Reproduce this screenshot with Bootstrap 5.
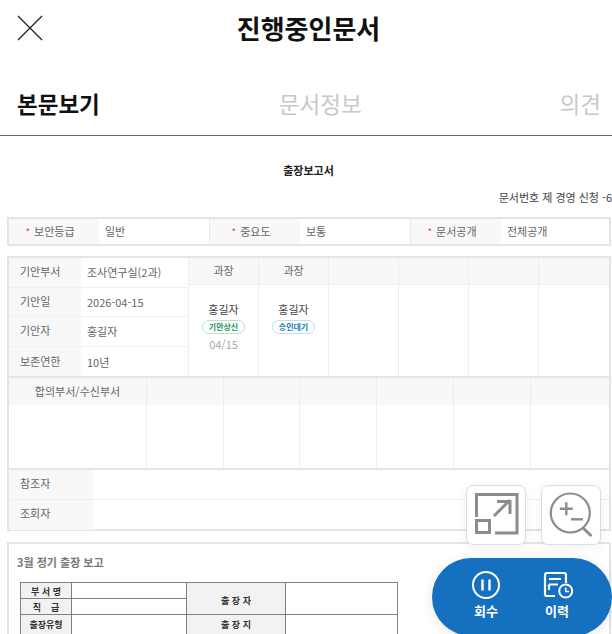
<!DOCTYPE html>
<html lang="ko"><head><meta charset="utf-8"><title>진행중인문서</title>
<link href="https://cdn.jsdelivr.net/npm/bootstrap@5.3.0/dist/css/bootstrap.min.css" rel="stylesheet">
<style>
html,body{height:634px;overflow:hidden}
body{font-family:"Noto Sans CJK KR","Noto Sans",sans-serif;color:#666;background:#fff;font-size:11px;width:612px;position:relative}
.top-head{height:57px}
.top-head .x-btn{left:17px;top:15px;line-height:0}
.top-head h1{font-size:26px;font-weight:700;color:#111;margin:0;line-height:55px;padding-left:5px}
.tab-bar{height:79px;padding:18px 11px 0 17px;border-bottom:1px solid #666;font-size:22.5px;line-height:57px;color:#c8c8c8}
.tab-bar .on{font-weight:700;color:#111}
.tab-mid{margin-right:19px}
.doc-title{font-size:11px;font-weight:700;color:#222;margin-top:26px;line-height:16px;padding-left:5px}
.doc-no{font-size:11px;color:#444;margin-top:11px;line-height:16px;height:28px;white-space:nowrap}
.frame{margin:0 1px 0 7px;border:2px solid #e4e4e4}
.f1{height:29px}
.cell-l{background:#f8f8f8;display:flex;align-items:center}
.pk{color:#e8467c;margin-right:4px;font-size:10px}
.meta-row{display:grid;grid-template-columns:90px 110px 1px 90px 110px 1px 90px 1fr;height:25px}
.meta-row .lab{justify-content:center;padding-right:8px}
.meta-row .val{padding-left:6px;line-height:25px}
.vb{background:#eaeaea}
.f2{margin-top:10px;height:275px}
.upper{display:grid;grid-template-columns:179px repeat(5,70px) 1fr;height:120px;border-bottom:2px solid #e4e4e4}
.info{display:grid;grid-template-rows:repeat(4,1fr)}
.info-row{display:grid;grid-template-columns:72px 1fr;border-bottom:1px solid #f0f0f0;line-height:26px}
.info-row:last-child{border-bottom:0;line-height:28px}
.info-row span:first-child{background:#f8f8f8;padding-left:11px}
.info-row span:last-child{padding-left:6px;padding-top:1px}
.appr{display:flex;flex-direction:column;border-left:1px solid #eee;text-align:center}
.appr-h{height:27px;background:#f8f8f8;border-bottom:1px solid #eee;line-height:25px;font-size:11px}
.appr-b{flex:1;padding-top:16px;line-height:17px;color:#444}
.stamp{display:inline-block;font-size:8px;font-weight:700;border:1px solid;border-radius:8px;line-height:12px;padding:0 6px;margin-top:2px;vertical-align:top}
.st-g{color:#1c9a55;border-color:#b9e3cb}
.st-b{color:#1a7fb5;border-color:#c3dcec}
.ad{color:#aaa;display:block;margin-top:1px}
.lower{display:grid;grid-template-columns:137px 77px 76px 77px 77px 77px 1fr;height:92px;border-bottom:2px solid #e4e4e4}
.lo-c{border-left:1px solid #eee}
.lo-c:first-child{border-left:0}
.lo-h{height:27px;background:#f8f8f8;line-height:26px;text-align:center}
.ref-row{display:grid;grid-template-columns:84px 1fr;height:30px;line-height:27px;border-bottom:1px solid #eee}
.ref-row:last-child{border-bottom:0}
.ref-row span:first-child{background:#f8f8f8;padding-left:11px}
.f3{margin-top:11px;height:110px;padding:10px 11px 0;border-bottom:0;overflow:hidden}
.f3 h2{font-size:11px;font-weight:700;color:#777;margin:0 0 11px -3px;line-height:17px}
.form-tb{table-layout:fixed;width:378px;border-collapse:collapse;font-size:9px;font-weight:700;color:#333;text-align:center}
.form-tb td{border:1px solid #808080;height:16px;padding:2px 0 0;line-height:13px}
.form-tb td[rowspan]{padding-top:3px}
.form-tb .g{background:#f2f2f2}
.form-tb .tall td{height:21px;padding-top:0;vertical-align:top;line-height:19px}
.tool{position:absolute;width:60px;height:60px;top:485px;background:rgba(255,255,255,.92);border:1px solid #ddd;border-radius:7px;box-shadow:0 2px 12px rgba(0,0,0,.06);padding:0}
.tool svg{display:block}
.t1{left:466px}.t2{left:541px}
.pill{position:absolute;left:432px;top:558px;width:180px;height:78px;border-radius:39px;background:#1570bf;color:#fff;font-size:13px;font-weight:700;box-shadow:0 2px 14px rgba(0,0,0,.1)}
.pill-i{position:absolute;top:12px;text-align:center;width:40px;line-height:16px}
.pill-i svg{display:block;margin:0 auto 3px}
.p1{left:34px}.p2{left:105px}
</style></head><body>
<header class="top-head position-relative text-center">
<span class="x-btn position-absolute"><svg width="26" height="26" viewBox="0 0 26 26"><path d="M1 1 25 25M25 1 1 25" stroke="#222" stroke-width="1.3" fill="none"/></svg></span>
<h1>진행중인문서</h1>
</header>
<nav class="tab-bar d-flex justify-content-between"><span class="on">본문보기</span><span class="tab-mid">문서정보</span><span>의견</span></nav>
<div class="doc-title text-center">출장보고서</div>
<div class="doc-no text-end">문서번호 제 경영 신청 -6</div>
<section class="frame f1"><div class="meta-row">
<span class="cell-l lab"><span class="pk">*</span>보안등급</span><span class="val">일반</span><span class="vb"></span>
<span class="cell-l lab"><span class="pk">*</span>중요도</span><span class="val">보통</span><span class="vb"></span>
<span class="cell-l lab"><span class="pk">*</span>문서공개</span><span class="val">전체공개</span>
</div></section>
<section class="frame f2">
<div class="upper">
<div class="info">
<div class="info-row"><span>기안부서</span><span>조사연구실(2과)</span></div>
<div class="info-row"><span>기안일</span><span>2026-04-15</span></div>
<div class="info-row"><span>기안자</span><span>홍길자</span></div>
<div class="info-row"><span>보존연한</span><span>10년</span></div>
</div>
<div class="appr"><div class="appr-h">과장</div><div class="appr-b">홍길자<br><span class="stamp st-g">기안상신</span><span class="ad">04/15</span></div></div>
<div class="appr"><div class="appr-h">과장</div><div class="appr-b">홍길자<br><span class="stamp st-b">승인대기</span></div></div>
<div class="appr"><div class="appr-h"></div><div class="appr-b"></div></div>
<div class="appr"><div class="appr-h"></div><div class="appr-b"></div></div>
<div class="appr"><div class="appr-h"></div><div class="appr-b"></div></div>
<div class="appr"><div class="appr-h"></div><div class="appr-b"></div></div>
</div>
<div class="lower">
<div class="lo-c"><div class="lo-h">합의부서/수신부서</div></div>
<div class="lo-c"><div class="lo-h"></div></div><div class="lo-c"><div class="lo-h"></div></div><div class="lo-c"><div class="lo-h"></div></div><div class="lo-c"><div class="lo-h"></div></div><div class="lo-c"><div class="lo-h"></div></div><div class="lo-c"><div class="lo-h"></div></div>
</div>
<div class="ref-row"><span>참조자</span><span></span></div>
<div class="ref-row"><span>조회자</span><span></span></div>
</section>
<section class="frame f3">
<h2>3월 정기 출장 보고</h2>
<table class="form-tb"><colgroup><col style="width:51px"><col style="width:115px"><col style="width:99px"><col></colgroup>
<tr><td class="g">부 서 명</td><td></td><td class="g" rowspan="2">출 장 자</td><td rowspan="2"></td></tr>
<tr><td class="g">직 &nbsp;&nbsp; 급</td><td></td></tr>
<tr class="tall"><td class="g">출장유형</td><td></td><td class="g">출 장 지</td><td></td></tr>
</table>
</section>
<button class="tool t1" type="button" aria-label="전체화면"><svg width="58" height="58" viewBox="0 0 58 58" fill="none" stroke="#8c8c8c" stroke-width="3"><path d="M9.5 31V8.5H50V47H28"/><rect x="9.5" y="34.5" width="13" height="12"/><path d="M27 30 43 14M30 15.5H43V28"/></svg></button>
<button class="tool t2" type="button" aria-label="확대축소"><svg width="58" height="58" viewBox="0 0 58 58" fill="none" stroke="#8c8c8c" stroke-width="2.2"><circle cx="28.3" cy="27" r="19.5"/><path d="M41 42 49.5 50" stroke-width="3"/><path d="M17.8 22.7H30.8M24.3 16.2V29.2" stroke-width="2.4"/><path d="M29 33.3H41" stroke-width="2.4"/></svg></button>
<div class="pill">
<div class="pill-i p1"><svg width="30" height="30" viewBox="0 0 30 30" fill="none" stroke="#fff" stroke-width="2"><circle cx="15" cy="15" r="13"/><path d="M11.5 9.5V20.5M18.5 9.5V20.5" stroke-width="2.4"/></svg>회수</div>
<div class="pill-i p2"><svg width="32" height="30" viewBox="0 0 32 30" fill="none" stroke="#fff" stroke-width="2.2"><path d="M14 26H6a2 2 0 0 1-2-2V5a2 2 0 0 1 2-2h17a2 2 0 0 1 2 2v8"/><path d="M8 9H20M8 14.5H17M8 14.5V20"/><circle cx="24.7" cy="21" r="6.5" fill="#1570bf" stroke-width="2"/><path d="M24.7 17.5V21.5H28" stroke-width="1.6"/></svg>이력</div>
</div>
</body></html>
